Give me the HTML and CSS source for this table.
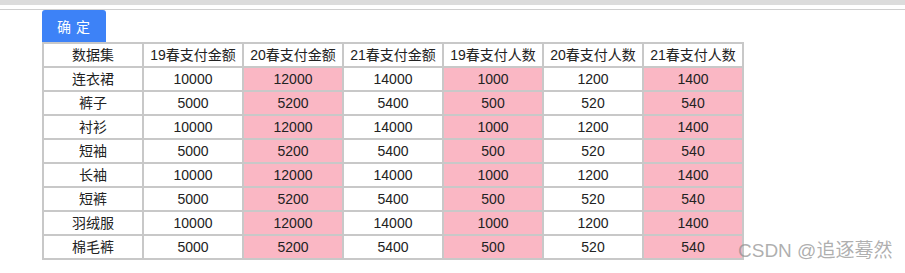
FILE: index.html
```html
<!DOCTYPE html>
<html lang="zh">
<head>
<meta charset="utf-8">
<link rel="stylesheet" href="styles.css">
</head>
<body>
<div class="topbar"></div>
<div class="page">
  <button class="btn">确 定</button>
  <table class="grid">
    <thead>
      <tr><th>数据集</th><th>19春支付金额</th><th>20春支付金额</th><th>21春支付金额</th><th>19春支付人数</th><th>20春支付人数</th><th>21春支付人数</th></tr>
    </thead>
    <tbody>
      <tr><td>连衣裙</td><td>10000</td><td class="hl">12000</td><td>14000</td><td class="hl">1000</td><td>1200</td><td class="hl">1400</td></tr>
      <tr><td>裤子</td><td>5000</td><td class="hl">5200</td><td>5400</td><td class="hl">500</td><td>520</td><td class="hl">540</td></tr>
      <tr><td>衬衫</td><td>10000</td><td class="hl">12000</td><td>14000</td><td class="hl">1000</td><td>1200</td><td class="hl">1400</td></tr>
      <tr><td>短袖</td><td>5000</td><td class="hl">5200</td><td>5400</td><td class="hl">500</td><td>520</td><td class="hl">540</td></tr>
      <tr><td>长袖</td><td>10000</td><td class="hl">12000</td><td>14000</td><td class="hl">1000</td><td>1200</td><td class="hl">1400</td></tr>
      <tr><td>短裤</td><td>5000</td><td class="hl">5200</td><td>5400</td><td class="hl">500</td><td>520</td><td class="hl">540</td></tr>
      <tr><td>羽绒服</td><td>10000</td><td class="hl">12000</td><td>14000</td><td class="hl">1000</td><td>1200</td><td class="hl">1400</td></tr>
      <tr><td>棉毛裤</td><td>5000</td><td class="hl">5200</td><td>5400</td><td class="hl">500</td><td>520</td><td class="hl">540</td></tr>
    </tbody>
  </table>
</div>
<div class="watermark">CSDN @追逐蓦然</div>
</body>
</html>
```
FILE: styles.css
```css
html, body {
  margin: 0;
  padding: 0;
  background: #fff;
  font-family: "Liberation Sans", "Noto Sans CJK SC", sans-serif;
  color: #222;
}
body {
  position: relative;
  width: 905px;
  height: 273px;
  overflow: hidden;
}
.topbar {
  height: 5px;
  background: #dcdcdc;
  border-bottom: 4px solid #fff;
}
.page {
  border-top: 1px solid #cfcfcf;
  padding-left: 42px;
  display: flex;
  flex-direction: column;
  align-items: flex-start;
}
.btn {
  width: 64px;
  height: 32px;
  border: none;
  border-radius: 3px 3px 0 0;
  background: #3d82f7;
  color: #fff;
  font-family: "Noto Sans CJK SC", sans-serif;
  font-size: 14px;
  letter-spacing: 1px;
  padding: 0;
}
.grid {
  border-collapse: collapse;
  table-layout: fixed;
  font-size: 14px;
}
.grid th, .grid td {
  width: 98px;
  height: 22px;
  padding: 0;
  border: 2px solid #c8c8c8;
  text-align: center;
  font-weight: normal;
  line-height: 22px;
  box-sizing: content-box;
}
.grid td.hl {
  background: #fab7c4;
}
.watermark {
  position: absolute;
  left: 738px;
  top: 238px;
  font-family: "Liberation Sans", "Noto Sans CJK SC", sans-serif;
  font-size: 19px;
  line-height: 26px;
  color: rgba(140, 140, 140, 0.7);
}
```
